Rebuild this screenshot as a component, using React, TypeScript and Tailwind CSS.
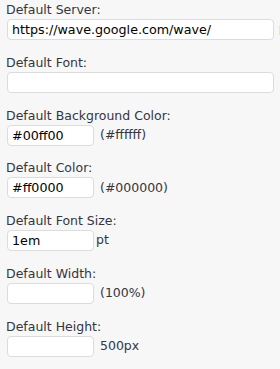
const rows: { label: string; value: string; wide?: boolean; suffix?: string; tight?: boolean }[] = [
  { label: 'Default Server:', value: 'https://wave.google.com/wave/', wide: true },
  { label: 'Default Font:', value: '', wide: true },
  { label: 'Default Background Color:', value: '#00ff00', suffix: '(#ffffff)' },
  { label: 'Default Color:', value: '#ff0000', suffix: '(#000000)' },
  { label: 'Default Font Size:', value: '1em', suffix: 'pt', tight: true },
  { label: 'Default Width:', value: '', suffix: '(100%)' },
  { label: 'Default Height:', value: '', suffix: '500px' },
];

export default function App() {
  return (
    <div className="relative w-[280px] h-[369px] bg-[#f7f7f7] pl-[6px] pt-[1px] font-['DejaVu_Sans',Verdana,sans-serif] text-[12.5px] text-[#353540]">
      {rows.map((r, i) => (
        <div key={r.label} className={i === 0 ? '' : 'mt-[13.8px]'}>
          <div className="leading-[18px]">{r.label}</div>
          <div className="flex items-center">
            <input
              readOnly
              value={r.value}
              className={
                'ml-[1px] h-[21px] rounded-[4px] border border-[#dcdcdc] bg-white px-[4px] text-[12.7px] text-black outline-none ' +
                (r.wide ? 'w-[267px]' : 'w-[87px]')
              }
            />
            {r.suffix && (
              <span className={r.tight ? 'ml-[2px]' : 'ml-[6px]'}>{r.suffix}</span>
            )}
          </div>
        </div>
      ))}
      <div className="absolute right-0 top-[25px] h-[10px] w-[1px] bg-[#f0eca8]" />
    </div>
  );
}
